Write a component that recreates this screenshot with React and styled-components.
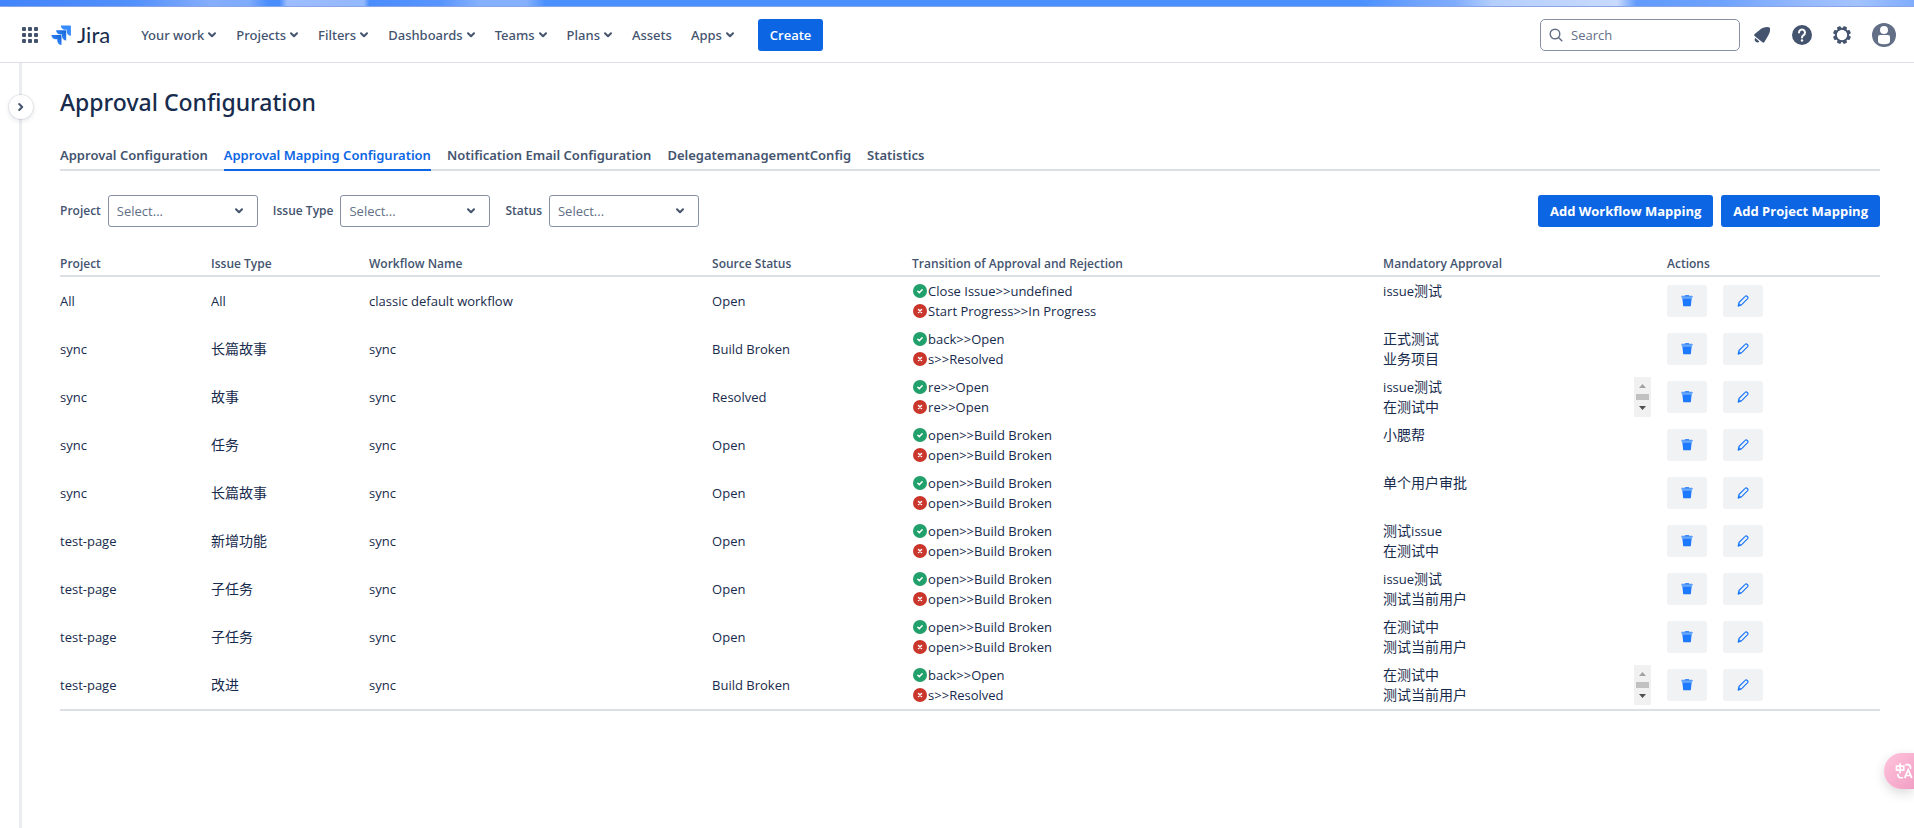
import React from 'react'
import styled, { createGlobalStyle } from 'styled-components'

const navItems = [
  { label: 'Your work', menu: true },
  { label: 'Projects', menu: true },
  { label: 'Filters', menu: true },
  { label: 'Dashboards', menu: true },
  { label: 'Teams', menu: true },
  { label: 'Plans', menu: true },
  { label: 'Assets', menu: false },
  { label: 'Apps', menu: true },
]

const tabs = [
  'Approval Configuration',
  'Approval Mapping Configuration',
  'Notification Email Configuration',
  'DelegatemanagementConfig',
  'Statistics',
]

const filters = [
  { id: 'project', label: 'Project' },
  { id: 'issue-type', label: 'Issue Type' },
  { id: 'status', label: 'Status' },
]

const columns = [
  { title: 'Project', width: '7.86%' },
  { title: 'Issue Type', width: '8.68%' },
  { title: 'Workflow Name', width: '18.85%' },
  { title: 'Source Status', width: '10.99%' },
  { title: 'Transition of Approval and Rejection', width: '25.88%' },
  { title: 'Mandatory Approval', width: '15.6%' },
  { title: 'Actions', width: '12.14%' },
]

const rows = [
  {
    project: 'All',
    type: 'All',
    workflow: 'classic default workflow',
    status: 'Open',
    approve: 'Close Issue>>undefined',
    reject: 'Start Progress>>In Progress',
    mandatory: ['issue测试'],
  },
  {
    project: 'sync',
    type: '长篇故事',
    workflow: 'sync',
    status: 'Build Broken',
    approve: 'back>>Open',
    reject: 's>>Resolved',
    mandatory: ['正式测试', '业务项目'],
  },
  {
    project: 'sync',
    type: '故事',
    workflow: 'sync',
    status: 'Resolved',
    approve: 're>>Open',
    reject: 're>>Open',
    mandatory: ['issue测试', '在测试中'],
    scroll: true,
  },
  {
    project: 'sync',
    type: '任务',
    workflow: 'sync',
    status: 'Open',
    approve: 'open>>Build Broken',
    reject: 'open>>Build Broken',
    mandatory: ['小腮帮'],
  },
  {
    project: 'sync',
    type: '长篇故事',
    workflow: 'sync',
    status: 'Open',
    approve: 'open>>Build Broken',
    reject: 'open>>Build Broken',
    mandatory: ['单个用户审批'],
  },
  {
    project: 'test-page',
    type: '新增功能',
    workflow: 'sync',
    status: 'Open',
    approve: 'open>>Build Broken',
    reject: 'open>>Build Broken',
    mandatory: ['测试issue', '在测试中'],
  },
  {
    project: 'test-page',
    type: '子任务',
    workflow: 'sync',
    status: 'Open',
    approve: 'open>>Build Broken',
    reject: 'open>>Build Broken',
    mandatory: ['issue测试', '测试当前用户'],
  },
  {
    project: 'test-page',
    type: '子任务',
    workflow: 'sync',
    status: 'Open',
    approve: 'open>>Build Broken',
    reject: 'open>>Build Broken',
    mandatory: ['在测试中', '测试当前用户'],
  },
  {
    project: 'test-page',
    type: '改进',
    workflow: 'sync',
    status: 'Build Broken',
    approve: 'back>>Open',
    reject: 's>>Resolved',
    mandatory: ['在测试中', '测试当前用户'],
    scroll: true,
  },
]

// icons
const Chevron = () => (
  <svg width="10" height="8" viewBox="0 0 10 8" fill="none">
    <path
      d="M2 2.2 L5 5.2 L8 2.2"
      stroke="currentColor"
      strokeWidth="2"
      strokeLinecap="round"
      strokeLinejoin="round"
    />
  </svg>
)

const AppsIcon = () => (
  <svg width="16" height="16" viewBox="0 0 16 16" fill="#44546f">
    {[0, 6, 12].map((y) =>
      [0, 6, 12].map((x) => (
        <rect key={`${x}-${y}`} x={x} y={y} width="4" height="4" rx="1" />
      ))
    )}
  </svg>
)

const JiraMark = () => (
  <svg width="20" height="20" viewBox="0 0 20 20">
    <defs>
      <linearGradient id="jira-a" x1="1" y1="0" x2="0.3" y2="0.8">
        <stop offset="0.2" stopColor="#1868db" />
        <stop offset="1" stopColor="#388bff" />
      </linearGradient>
    </defs>
    <path
      fill="#388bff"
      d="M19.2 0.6H9.8a4.2 4.2 0 0 0 4.2 4.2h1.7v1.7a4.2 4.2 0 0 0 4.2 4.2V1.3a.7.7 0 0 0-.7-.7z"
    />
    <path
      fill="url(#jira-a)"
      d="M14.5 5.3H5.1a4.2 4.2 0 0 0 4.2 4.2H11v1.7a4.2 4.2 0 0 0 4.2 4.2V6a.7.7 0 0 0-.7-.7z"
    />
    <path
      fill="url(#jira-a)"
      d="M9.8 10H.4a4.2 4.2 0 0 0 4.2 4.2h1.7v1.6A4.2 4.2 0 0 0 10.5 20v-9.3a.7.7 0 0 0-.7-.7z"
    />
  </svg>
)

const SearchIcon = () => (
  <svg width="14" height="14" viewBox="0 0 14 14" fill="none" stroke="#626f86">
    <circle cx="6" cy="6" r="4.8" strokeWidth="1.4" />
    <path d="M9.5 9.5 L12.8 12.8" strokeWidth="1.5" strokeLinecap="round" />
  </svg>
)

const BellIcon = () => (
  <svg width="24" height="24" viewBox="0 0 24 24" fill="#44546f">
    <path d="M11.5 5.6 Q14.5 3.7 18.8 4.2 Q20 4.4 20.1 5.5 Q20.4 9.3 18.4 12.2 L14.4 18.9 Q13.6 20.2 12.4 19.3 L4.6 13 Q3.4 11.8 4.7 10.9 Z" />
    <path d="M5.4 15.1 L9.4 18.4 A2.5 2.5 0 0 1 5.4 15.1z" />
  </svg>
)

const HelpIcon = () => (
  <svg width="24" height="24" viewBox="0 0 24 24" fill="none">
    <circle cx="12" cy="12" r="10" fill="#44546f" />
    <path
      d="M9 9.5 a3 3 0 1 1 4.5 2.6 Q12 13 12 14.4"
      stroke="#fff"
      strokeWidth="2"
      strokeLinecap="round"
    />
    <circle cx="12" cy="17.5" r="1.2" fill="#fff" />
  </svg>
)

const GearIcon = () => (
  <svg width="24" height="24" viewBox="0 0 24 24" fill="none">
    <circle cx="12" cy="12" r="6.2" stroke="#44546f" strokeWidth="2" />
    {[22.5, 67.5, 112.5, 157.5, 202.5, 247.5, 292.5, 337.5].map((a) => (
      <rect
        key={a}
        x="10"
        y="3"
        width="4"
        height="3.6"
        rx="1"
        fill="#44546f"
        transform={`rotate(${a} 12 12)`}
      />
    ))}
  </svg>
)

const AvatarIcon = () => (
  <svg width="24" height="24" viewBox="0 0 24 24">
    <circle cx="12" cy="12" r="12" fill="#626f86" />
    <circle cx="12" cy="7" r="4" fill="#fff" />
    <path d="M6 14a2 2 0 0 1 2-2h8a2 2 0 0 1 2 2v4q0 3.2-6 3.2T6 18z" fill="#fff" />
  </svg>
)

const ApproveIcon = () => (
  <svg width="16" height="16" viewBox="0 0 16 16" fill="none">
    <circle cx="8" cy="8" r="7" fill="#22a06b" />
    <path d="M5.8 8.2 L7.3 9.6 L10.2 6.7" stroke="#fff" strokeWidth="1.5" strokeLinecap="round" />
  </svg>
)

const RejectIcon = () => (
  <svg width="16" height="16" viewBox="0 0 16 16" fill="none">
    <circle cx="8" cy="8" r="7" fill="#c9372c" />
    <path
      d="M6.5 6.5 L9.5 9.5 M9.5 6.5 L6.5 9.5"
      stroke="#fff"
      strokeWidth="1.5"
      strokeLinecap="round"
    />
  </svg>
)

const TrashIcon = () => (
  <svg width="12" height="12" viewBox="0 0 12 12">
    <path d="M1.3 2.8 H10.7 L9.8 11.3 H2.2z" fill="#1d7afc" />
    <path d="M1.3 2.8 H10.7 L10.6 4 H1.4z" fill="#579dff" />
    <rect x="0.5" y="0.8" width="11" height="2" rx="0.5" fill="#579dff" />
    <rect x="4" y="0.2" width="4" height="1" fill="#1d7afc" />
  </svg>
)

const PencilIcon = () => (
  <svg width="12" height="12" viewBox="0 0 12 12" fill="none" stroke="#1d7afc">
    <path
      d="M2 7.5 L7.9 1.6 A1.6 1.6 0 0 1 10.4 3.9 L4.4 9.9 L1.3 10.8 Z"
      strokeWidth="1.2"
      strokeLinejoin="round"
    />
    <path d="M1 11.2 L1.9 8.3 L3.8 10.2z" fill="#1d7afc" strokeWidth="0.5" />
  </svg>
)

const TranslateIcon = () => (
  <svg width="22" height="18" viewBox="0 0 24 20" fill="none" stroke="#fff" strokeWidth="1.9">
    <path d="M1.5 4.5 H9.5 V9 H1.5 Z M5.5 1.5 V12.5" />
    <path d="M12 3 H14 Q17 3 17 6 V7" strokeLinecap="round" />
    <path d="M3 14 Q3 17.5 6 17.5 H8" strokeLinecap="round" />
    <path d="M10.5 18 L14.5 8.5 L18.5 18 M12 15 H17" />
  </svg>
)

const ScrollArrow = ({ down }) => (
  <svg width="7" height="4" viewBox="0 0 7 4">
    <path d={down ? 'M0 0 H7 L3.5 4z' : 'M0 4 H7 L3.5 0z'} fill={down ? '#505050' : '#a3a3a3'} />
  </svg>
)

// chinese runs are one size larger than the latin text next to them
const MixedText = ({ text }) =>
  text
    .split(/([\u4e00-\u9fff]+)/)
    .filter(Boolean)
    .map((part, index) =>
      /[\u4e00-\u9fff]/.test(part) ? <Han key={index}>{part}</Han> : part
    )

const App = () => {
  return (
    <>
      <GlobalStyle />
      <Banner />
      <Header>
        <AppSwitcher aria-label="App switcher">
          <AppsIcon />
        </AppSwitcher>
        <Logo href="#">
          <JiraMark />
          Jira
        </Logo>
        <Nav>
          {navItems.map((item) => (
            <NavButton key={item.label}>
              {item.label}
              {item.menu && <Chevron />}
            </NavButton>
          ))}
        </Nav>
        <PrimaryButton>Create</PrimaryButton>
        <HeaderRight>
          <SearchBox>
            <SearchIcon />
            <input type="text" placeholder="Search" aria-label="Search" />
          </SearchBox>
          <IconButton aria-label="Notifications">
            <BellIcon />
          </IconButton>
          <IconButton aria-label="Help">
            <HelpIcon />
          </IconButton>
          <IconButton aria-label="Settings">
            <GearIcon />
          </IconButton>
          <ProfileButton aria-label="Your profile">
            <AvatarIcon />
          </ProfileButton>
        </HeaderRight>
      </Header>

      <Layout>
        <SideRail>
          <ExpandButton aria-label="Expand sidebar">
            <Chevron />
          </ExpandButton>
        </SideRail>
        <Main>
          <h1>Approval Configuration</h1>
          <Tabs role="tablist">
            {tabs.map((tab, index) => (
              <Tab key={tab} role="tab" aria-selected={index === 1} $active={index === 1}>
                {tab}
              </Tab>
            ))}
          </Tabs>

          <Toolbar>
            {filters.map((filter) => (
              <Filter key={filter.id}>
                <label htmlFor={filter.id}>{filter.label}</label>
                <SelectBox>
                  <select id={filter.id} defaultValue="">
                    <option value="">Select...</option>
                  </select>
                  <Chevron />
                </SelectBox>
              </Filter>
            ))}
            <ToolbarButtons>
              <PrimaryButton $bold>Add Workflow Mapping</PrimaryButton>
              <PrimaryButton $bold>Add Project Mapping</PrimaryButton>
            </ToolbarButtons>
          </Toolbar>

          <Table>
            <thead>
              <tr>
                {columns.map((col) => (
                  <Th key={col.title} $width={col.width}>
                    {col.title}
                  </Th>
                ))}
              </tr>
            </thead>
            <tbody>
              {rows.map((row, index) => (
                <tr key={index}>
                  <td>{row.project}</td>
                  <td>
                    <MixedText text={row.type} />
                  </td>
                  <td>{row.workflow}</td>
                  <td>{row.status}</td>
                  <td>
                    <Transition>
                      <ApproveIcon />
                      {row.approve}
                    </Transition>
                    <Transition>
                      <RejectIcon />
                      {row.reject}
                    </Transition>
                  </td>
                  <td>
                    <Mandatory>
                      <div>
                        {row.mandatory.map((name) => (
                          <MandatoryName key={name}>
                            <MixedText text={name} />
                          </MandatoryName>
                        ))}
                      </div>
                      {row.scroll && (
                        <Scrollbar>
                          <ScrollArrow />
                          <Thumb />
                          <ScrollArrow down />
                        </Scrollbar>
                      )}
                    </Mandatory>
                  </td>
                  <td>
                    <Actions>
                      <ActionButton aria-label="Delete">
                        <TrashIcon />
                      </ActionButton>
                      <ActionButton aria-label="Edit">
                        <PencilIcon />
                      </ActionButton>
                    </Actions>
                  </td>
                </tr>
              ))}
            </tbody>
          </Table>
        </Main>
      </Layout>

      <TranslateButton aria-label="Translate">
        <TranslateIcon />
      </TranslateButton>
    </>
  )
}

const GlobalStyle = createGlobalStyle`
  * {
    box-sizing: border-box;
  }
  body {
    margin: 0;
    background: #fff;
    color: #172b4d;
    font-family: 'Open Sans', 'Noto Sans CJK SC', sans-serif;
    font-size: 13px;
    line-height: 20px;
  }
  #root {
    display: flex;
    flex-direction: column;
    min-height: 100vh;
  }
  button, input, select {
    font: inherit;
    color: inherit;
  }
  button {
    border: none;
    background: none;
    padding: 0;
    cursor: pointer;
  }
  svg {
    flex-shrink: 0;
  }
`

const Banner = styled.div`
  height: 7px;
  border-bottom: 1px solid #8ba4e6;
  background: linear-gradient(
    90deg,
    #4284fb 0%,
    #5290fb 7%,
    #85aefb 11%,
    #7fabfb 13%,
    #4a8dfd 14%,
    #4a8dfd 14.6%,
    #9dbdfd 15%,
    #94b8fd 19%,
    #4a8dfd 19.3%,
    #5894fd 23%,
    #85b0fd 25%,
    #85b0fd 27.5%,
    #4a90ff 28.5%,
    #4a90ff 71%,
    #6ea3fd 74%,
    #7facfd 76%,
    #b5cffd 78%,
    #c8dafd 84.5%,
    #629bfd 85.5%,
    #6ea3fd 90%,
    #94b8fd 94%,
    #a3c3fd 97%,
    #7facfd 100%
  );
`

const Header = styled.header`
  display: flex;
  align-items: center;
  height: 56px;
  padding: 0 18px 0 22px;
  border-bottom: 1px solid #dcdfe4;
`

const AppSwitcher = styled.button`
  display: flex;
`

const Logo = styled.a`
  display: flex;
  align-items: center;
  gap: 6px;
  margin-left: 13px;
  color: #172b4d;
  font-family: Lato, sans-serif;
  font-size: 22px;
  text-decoration: none;
`

const Nav = styled.nav`
  display: flex;
  gap: 19px;
  margin: 0 23px 0 31px;
`

const NavButton = styled.button`
  display: flex;
  align-items: center;
  gap: 3px;
  color: #44546f;
  font-family: 'Noto Sans', sans-serif;
  font-weight: 500;
`

const PrimaryButton = styled.button`
  height: 32px;
  padding: 0 12px;
  border-radius: 3px;
  background: #0c66e4;
  color: #fff;
  font-weight: ${(props) => (props.$bold ? 700 : 600)};
  white-space: nowrap;
`

const HeaderRight = styled.div`
  display: flex;
  align-items: center;
  gap: 16px;
  margin-left: auto;
`

const SearchBox = styled.div`
  display: flex;
  align-items: center;
  gap: 8px;
  width: 200px;
  height: 32px;
  padding: 0 8px;
  margin-right: -6px;
  border: 1px solid #8590a2;
  border-radius: 5px;

  input {
    flex: 1;
    min-width: 0;
    padding: 0;
    border: none;
    outline: none;
    background: none;
  }
  input::placeholder {
    color: #626f86;
  }
`

const IconButton = styled.button`
  display: flex;
`

const ProfileButton = styled(IconButton)`
  margin-left: 2px;
`

const Layout = styled.div`
  display: flex;
  flex: 1;
`

const SideRail = styled.aside`
  position: relative;
  width: 22px;
  border-right: 3px solid #ebecf0;
`

const ExpandButton = styled.button`
  position: absolute;
  top: 32px;
  right: -14px;
  display: flex;
  align-items: center;
  justify-content: center;
  width: 24px;
  height: 24px;
  border-radius: 50%;
  background: #fff;
  color: #44546f;
  box-shadow: 0 0 0 1px rgba(9, 30, 66, 0.08), 0 2px 4px 1px rgba(9, 30, 66, 0.08);

  svg {
    transform: rotate(-90deg);
  }
`

const Main = styled.main`
  flex: 1;
  min-width: 0;
  padding: 25px 34px 40px 38px;

  h1 {
    margin: 0;
    font-family: 'Noto Sans', sans-serif;
    font-size: 23px;
    font-weight: 500;
    line-height: 28px;
  }
`

const Tabs = styled.div`
  display: flex;
  gap: 16px;
  margin-top: 23px;
  box-shadow: inset 0 -2px 0 #dcdfe4;
`

const Tab = styled.button`
  padding: 6px 0;
  color: ${(props) => (props.$active ? '#0c66e4' : '#44546f')};
  font-family: 'Noto Sans', sans-serif;
  font-weight: 600;
  box-shadow: ${(props) => (props.$active ? 'inset 0 -2px 0 #0c66e4' : 'none')};
`

const Toolbar = styled.div`
  display: flex;
  align-items: center;
  gap: 15px;
  margin-top: 24px;
`

const Filter = styled.div`
  display: flex;
  align-items: center;
  gap: 7px;

  label {
    color: #44546f;
    font-size: 12px;
    font-weight: 600;
  }
`

const SelectBox = styled.div`
  display: grid;
  align-items: center;
  width: 150px;

  select {
    grid-area: 1 / 1;
    width: 100%;
    height: 32px;
    padding: 0 8px;
    border: 1px solid #8590a2;
    border-radius: 3px;
    background: #fff;
    color: #626f86;
    appearance: none;
  }
  svg {
    grid-area: 1 / 1;
    justify-self: end;
    margin-right: 14px;
    color: #44546f;
    pointer-events: none;
  }
`

const ToolbarButtons = styled.div`
  display: flex;
  gap: 8px;
  margin-left: auto;
`

const Table = styled.table`
  width: 100%;
  margin-top: 24px;
  border-collapse: separate;
  border-spacing: 0;
  table-layout: fixed;

  tbody td {
    height: 48px;
    padding: 4px 8px;
  }
  td:first-child,
  th:first-child {
    padding-left: 0;
  }
  tbody tr:last-child td {
    height: 50px;
    border-bottom: 2px solid #dcdfe4;
  }
`

const Th = styled.th`
  width: ${(props) => props.$width};
  padding: 3px 8px 1px;
  border-bottom: 2px solid #dcdfe4;
  color: #44546f;
  font-size: 12px;
  font-weight: 600;
  text-align: left;
  white-space: nowrap;
`

const Han = styled.span`
  font-size: 14px;
  line-height: 1;
`

const Transition = styled.div`
  display: flex;
  align-items: center;
`

const Mandatory = styled.div`
  display: flex;
  justify-content: space-between;
  height: 40px;
`

const MandatoryName = styled.div`
  height: 20px;
`

const Scrollbar = styled.div`
  display: flex;
  flex-direction: column;
  align-items: center;
  justify-content: space-between;
  width: 17px;
  padding: 7px 2px;
  background: #f1f1f1;
`

const Thumb = styled.div`
  width: 13px;
  height: 6px;
  background: #c1c1c1;
`

const Actions = styled.div`
  display: flex;
  gap: 16px;
`

const ActionButton = styled.button`
  display: flex;
  align-items: center;
  justify-content: center;
  width: 40px;
  height: 32px;
  border-radius: 3px;
  background: #f1f2f4;
`

const TranslateButton = styled.button`
  position: fixed;
  right: 0;
  bottom: 39px;
  display: flex;
  align-items: center;
  width: 30px;
  height: 36px;
  padding-left: 11px;
  overflow: hidden;
  border-radius: 18px 0 0 18px;
  background: linear-gradient(135deg, #ffc4dc, #f19fc4);
  box-shadow: 0 4px 12px rgba(0, 0, 0, 0.15);
`

export default App
